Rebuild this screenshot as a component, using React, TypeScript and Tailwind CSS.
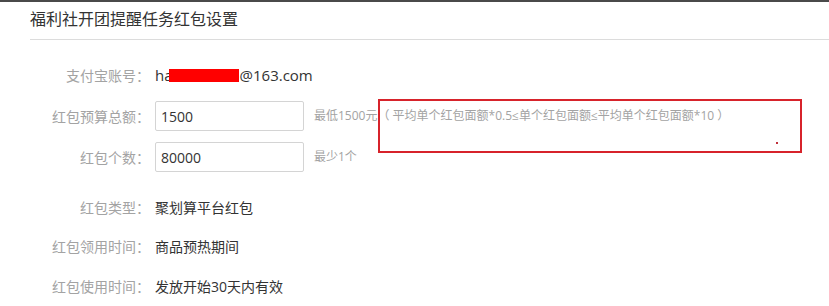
import React from 'react'

const FONT = "font-['Open_Sans','Noto_Sans_CJK_SC',sans-serif]"

/* ── form rows ───────────────────────────────────────────────── */
function Label({ children }: { children: React.ReactNode }) {
  return <div className="w-[120px] shrink-0 text-right text-[14px] text-[#a3a3a3]">{children}</div>
}

function InputBox({ value }: { value: string }) {
  return (
    <div className="ml-[5px] flex h-[30px] w-[149px] items-center rounded-[2px] border border-[#d4d4d4] bg-white pl-[5px] text-[14px] text-[#333]">
      {value}
    </div>
  )
}

export default function App() {
  return (
    <div className={`relative h-[306px] w-[829px] overflow-hidden border-t-2 border-[#4a4a4a] bg-white ${FONT}`}>
      {/* title */}
      <div className="ml-[30px] h-[38px] border-b border-[#dcdcdc] pt-[6px] text-[16px] leading-[22px] text-[#333]">
        福利社开团提醒任务红包设置
      </div>

      <div className="flex flex-col pl-[30px]">
        <div className="mt-[20px] flex h-[30px] items-center">
          <Label>支付宝账号：</Label>
          <div className="ml-[5px] flex items-center text-[15px] text-[#333]">
            <span>ha</span>
            <span className="ml-[-4px] inline-block h-[13px] w-[70px] bg-[#ff0000]" />
            <span className="ml-[1px]">@163.com</span>
          </div>
        </div>

        <div className="mt-[11px] flex h-[30px] items-center">
          <Label>红包预算总额：</Label>
          <InputBox value="1500" />
          <div className="ml-[10px] text-[12px] text-[#a3a3a3]">
            最低1500元（ 平均单个红包面额*0.5≤单个红包面额≤平均单个红包面额*10 ）
          </div>
        </div>

        <div className="mt-[11px] flex h-[30px] items-center">
          <Label>红包个数：</Label>
          <InputBox value="80000" />
          <div className="ml-[10px] text-[12px] text-[#a3a3a3]">最少1个</div>
        </div>

        <div className="mt-[20px] flex h-[30px] items-center">
          <Label>红包类型：</Label>
          <div className="ml-[5px] text-[14px] text-[#333]">聚划算平台红包</div>
        </div>

        <div className="mt-[9px] flex h-[30px] items-center">
          <Label>红包领用时间：</Label>
          <div className="ml-[5px] text-[14px] text-[#333]">商品预热期间</div>
        </div>

        <div className="mt-[10px] flex h-[30px] items-center">
          <Label>红包使用时间：</Label>
          <div className="ml-[5px] text-[14px] text-[#333]">发放开始30天内有效</div>
        </div>
      </div>

      {/* red annotation box */}
      <div className="absolute left-[378px] top-[97px] h-[54px] w-[424px] border-2 border-[#d7232b]">
        <span className="absolute left-[396px] top-[41px] h-[2px] w-[2px] bg-[#c0303a]" />
      </div>
    </div>
  )
}
